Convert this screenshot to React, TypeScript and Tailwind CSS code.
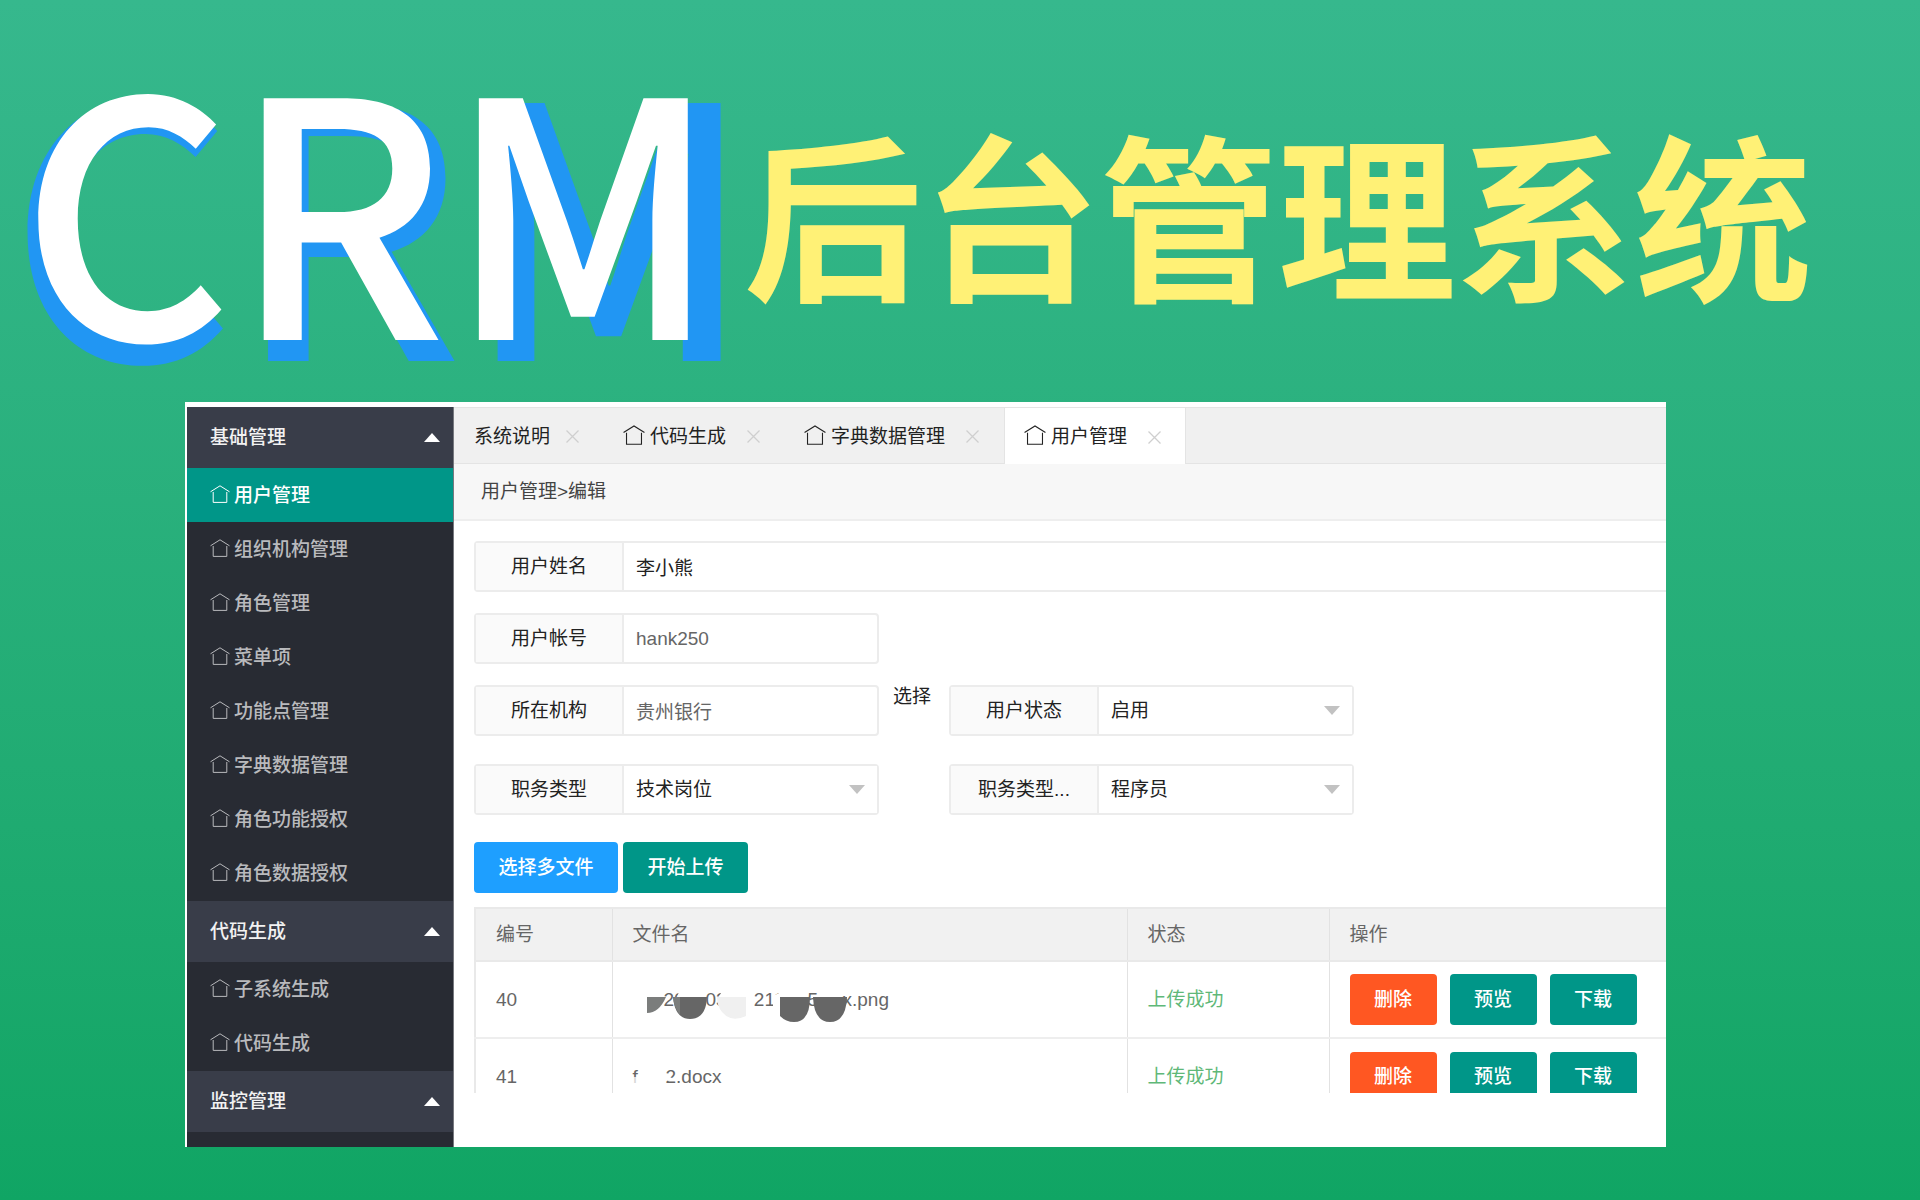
import { ReactNode } from "react";

const menuGroups = [
  {
    title: "基础管理",
    items: [
      "用户管理",
      "组织机构管理",
      "角色管理",
      "菜单项",
      "功能点管理",
      "字典数据管理",
      "角色功能授权",
      "角色数据授权",
    ],
  },
  { title: "代码生成", items: ["子系统生成", "代码生成"] },
  { title: "监控管理", items: [] },
];

const tabs = [
  { name: "系统说明", icon: false },
  { name: "代码生成", icon: true },
  { name: "字典数据管理", icon: true },
  { name: "用户管理", icon: true, active: true },
];

function HouseIcon({ className }: { className?: string }) {
  return (
    <svg viewBox="0 0 20 18" fill="none" stroke="currentColor" strokeWidth="1" className={className} aria-hidden="true">
      <path d="M0.5 6.8L10 0.8L19.5 6.8" />
      <path d="M3.2 7V17.4H16.8V7" />
    </svg>
  );
}

function Triangle({ className }: { className?: string }) {
  return (
    <svg viewBox="0 0 16 9" fill="currentColor" className={className} aria-hidden="true">
      <path d="M0 0H16L8 9Z" />
    </svg>
  );
}

function Field({ id, label, wide, children }: { id: string; label: string; wide?: boolean; children: ReactNode }) {
  return (
    <div
      className={
        wide
          ? "flex h-[51px] flex-1 border-2 border-r-0 border-[#ececec] rounded-l-sm"
          : "flex h-[51px] w-[405px] border-2 border-[#ececec] rounded-sm"
      }
    >
      <label
        htmlFor={id}
        className="w-[148px] shrink-0 flex items-center justify-center bg-[#fafafa] border-r-2 border-[#ececec]"
      >
        {label}
      </label>
      <div className="relative flex-1">{children}</div>
    </div>
  );
}

function SelectField({ id, label, value }: { id: string; label: string; value: string }) {
  return (
    <Field id={id} label={label}>
      <select id={id} className="w-full h-full pl-3 pr-9 appearance-none bg-white outline-none">
        <option>{value}</option>
      </select>
      <Triangle className="absolute right-3 top-[19px] w-4 h-[9px] text-[#c2c2c2] pointer-events-none" />
    </Field>
  );
}

function RowActions() {
  return (
    <div className="flex gap-[13px]">
      <button className="w-[87px] h-[51px] rounded-sm bg-[#ff5722] text-white">删除</button>
      <button className="w-[87px] h-[51px] rounded-sm bg-[#009688] text-white">预览</button>
      <button className="w-[87px] h-[51px] rounded-sm bg-[#009688] text-white">下载</button>
    </div>
  );
}

// File name with most of its characters painted over
function MaskedPng() {
  return (
    <div className="relative h-9 flex items-center">
      <span className="w-[42px] ml-[31px]">20</span>
      <span className="w-[42px]">03</span>
      <span className="w-[60px]">-211</span>
      <span className="w-[35px]">5</span>
      <span>x.png</span>
      <svg viewBox="0 0 270 40" className="absolute left-0 top-0 w-[270px] h-10" aria-hidden="true">
        <path d="M47 8Q43 14 45 28H71V4H50Z" fill="#fff" />
        <path d="M90 8Q86 12 87 18L85 28H119V4H92Z" fill="#fff" />
        <path d="M119 6H121V28H119Z" fill="#fff" />
        <path d="M140 28V14L148 10V28Z" fill="#fff" />
        <path d="M14 15H33Q26 31 14 31Z" fill="#7b7d7c" />
        <path d="M40 15H74Q73 37 57 37Q42 37 40 15Z" fill="#666" />
        <path d="M40 15H47V33Q41 26 40 15Z" fill="#7b7d7c" />
        <path d="M84 15H113V34Q98 41 89 30Q84 24 84 15Z" fill="#f0f0f0" />
        <path d="M147 15H177Q177 40 161 40Q153 40 147 34Z" fill="#666" />
        <path d="M180 15H214Q213 40 197 40Q181 40 180 15Z" fill="#666" />
      </svg>
    </div>
  );
}

function MaskedDocx() {
  return (
    <div className="relative h-9 flex items-center">
      <span className="w-[33px]">f</span>
      <span>2.docx</span>
      <svg viewBox="0 0 45 36" className="absolute left-0 top-0 w-[45px] h-9" aria-hidden="true">
        <path d="M0 18H10V28H0Z" fill="#fff" opacity="0.75" />
        <path d="M31 17L37 18L41 20L36 22L31 21Z" fill="#fff" />
      </svg>
    </div>
  );
}

export default function App() {
  return (
    <div className="min-h-screen overflow-hidden bg-linear-to-b from-[#36b88d] to-[#10a564] font-['Liberation_Sans','Noto_Sans_CJK_SC',sans-serif] text-[19px] leading-7 text-[#222]">
      {/* Banner title */}
      <h1 className="relative flex h-[402px] whitespace-nowrap font-['Noto_Sans_CJK_SC',sans-serif]">
        <span
          aria-hidden="true"
          className="absolute left-2 top-0 text-[350px] leading-[418px] font-medium text-[#2196f3]"
        >
          CRM
        </span>
        <span className="relative w-[744px] shrink-0 pl-5 text-[328px] leading-[394px] font-medium text-white">CRM</span>
        <span className="relative pt-4 text-[178px] leading-[390px] font-bold text-[#fff176]">后台管理系统</span>
      </h1>

      {/* Admin window */}
      <div className="ml-[185px] mr-[254px] flex h-[745px] overflow-hidden bg-white pt-[5px] pl-0.5">
        <nav className="w-[267px] shrink-0 bg-[#282b33] border-r border-[#77797f]">
          {menuGroups.map((group) => (
            <div key={group.title} className="pb-px">
              <button className="w-full h-[61px] pl-[23px] pr-[13px] flex items-center justify-between bg-[#393d49] text-[#f2f2f2] font-medium">
                {group.title}
                <Triangle className="w-4 h-[9px] rotate-180 text-white" />
              </button>
              {group.items.map((item, i) => {
                const active = group.title === "基础管理" && i === 0;
                return (
                  <a
                    key={item}
                    href="#"
                    className={
                      active
                        ? "h-[54px] pl-[23px] pt-0.5 flex items-center gap-1 bg-[#009688] text-white font-medium"
                        : "h-[54px] pl-[23px] pt-0.5 flex items-center gap-1 text-[#b9babd] font-medium"
                    }
                  >
                    <HouseIcon className="w-5 h-[18px] mb-1" />
                    {item}
                  </a>
                );
              })}
            </div>
          ))}
        </nav>

        <main className="flex-1 min-w-0">
          <div className="flex h-[57px] bg-[#f0f0f0] border-y border-[#e4e4e4]">
            {tabs.map((tab) => (
              <div
                key={tab.name}
                className={
                  tab.active
                    ? "h-[56px] pl-[19px] pr-6 flex items-center bg-white border-x border-[#e4e4e4]"
                    : "pl-[19px] pr-[25px] flex items-center first:pl-5"
                }
              >
                <button className="flex items-center gap-[5px] pt-0.5">
                  {tab.icon && <HouseIcon className="w-[22px] h-5 mb-1" />}
                  {tab.name}
                </button>
                <button aria-label="关闭" className={tab.icon ? "ml-[21px] pt-0.5 text-[#cfcfcf]" : "ml-4 pt-0.5 text-[#cfcfcf]"}>
                  <svg viewBox="0 0 13 13" className="w-[13px] h-[13px]" stroke="currentColor" strokeWidth="1.3">
                    <path d="M0.5 0.5L12.5 12.5M12.5 0.5L0.5 12.5" />
                  </svg>
                </button>
              </div>
            ))}
          </div>

          <div className="h-[57px] px-[27px] flex items-center bg-[#f7f7f7] border-b-2 border-[#eee] text-[#444]">
            用户管理&gt;编辑
          </div>

          <form className="pt-5 pl-5" onSubmit={(e) => e.preventDefault()}>
            <div className="flex mb-[21px]">
              <Field id="name" label="用户姓名" wide>
                <input id="name" defaultValue="李小熊" className="w-full h-full px-3 outline-none" />
              </Field>
            </div>
            <div className="flex mb-[21px]">
              <Field id="account" label="用户帐号">
                <input id="account" defaultValue="hank250" className="w-full h-full px-3 outline-none text-[#666]" />
              </Field>
            </div>
            <div className="flex mb-7">
              <Field id="org" label="所在机构">
                <input id="org" defaultValue="贵州银行" className="w-full h-full px-3 outline-none text-[#666]" />
              </Field>
              <button className="w-[70px] h-6 pr-1 flex items-center justify-center">选择</button>
              <SelectField id="status" label="用户状态" value="启用" />
            </div>
            <div className="flex mb-[27px] gap-[70px]">
              <SelectField id="job" label="职务类型" value="技术岗位" />
              <SelectField id="jobDetail" label="职务类型..." value="程序员" />
            </div>

            <div className="flex gap-[5px] mb-[14px] font-medium">
              <button className="w-36 h-[51px] rounded-sm bg-[#1e9fff] text-white">选择多文件</button>
              <button className="w-[125px] h-[51px] rounded-sm bg-[#009688] text-white">开始上传</button>
            </div>

            {/* Uploaded files, cut off by the scroll area */}
            <div className="h-[186px] overflow-hidden text-[#666]">
              <table className="w-full table-fixed border-collapse border-t-2 border-l-2 border-[#e9e9e9]">
                <thead>
                  <tr className="h-[53px] bg-[#f1f1f1] text-left border-b-2 border-[#e9e9e9]">
                    <th className="w-[137px] pl-5 font-normal border-r border-[#e2e2e2]">编号</th>
                    <th className="w-[515px] pl-5 font-normal border-r border-[#e2e2e2]">文件名</th>
                    <th className="w-[202px] pl-5 font-normal border-r border-[#e2e2e2]">状态</th>
                    <th className="pl-5 font-normal">操作</th>
                  </tr>
                </thead>
                <tbody>
                  <tr className="h-[77px] border-b-2 border-[#eee]">
                    <td className="pl-5 border-r border-[#e2e2e2]">40</td>
                    <td className="pl-5 border-r border-[#e2e2e2]">
                      <MaskedPng />
                    </td>
                    <td className="pl-5 border-r border-[#e2e2e2] text-[#5fb878]">上传成功</td>
                    <td className="pl-5 font-medium">
                      <RowActions />
                    </td>
                  </tr>
                  <tr className="h-[77px]">
                    <td className="pl-5 border-r border-[#e2e2e2]">41</td>
                    <td className="pl-5 border-r border-[#e2e2e2]">
                      <MaskedDocx />
                    </td>
                    <td className="pl-5 border-r border-[#e2e2e2] text-[#5fb878]">上传成功</td>
                    <td className="pl-5 font-medium">
                      <RowActions />
                    </td>
                  </tr>
                </tbody>
              </table>
            </div>
          </form>
        </main>
      </div>
    </div>
  );
}
